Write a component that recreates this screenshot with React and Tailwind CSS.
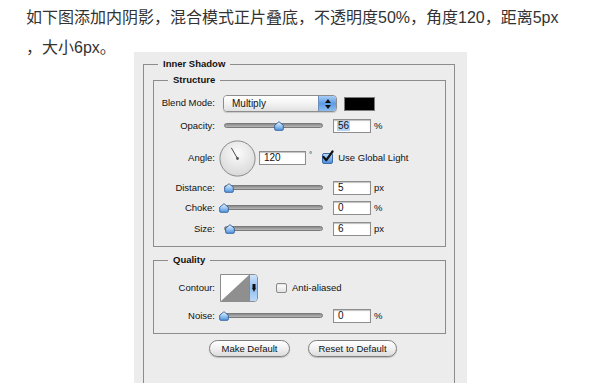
import React from 'react';

// slider thumb: little blue "house" shape
function Thumb({ left }) {
  return (
    <svg
      width="10"
      height="10"
      viewBox="0 0 10 10"
      className="absolute top-[2px]"
      style={{ left }}
    >
      <defs>
        <linearGradient id="thumbFill" x1="0" y1="0" x2="0" y2="1">
          <stop offset="0" stopColor="#eef6ff" />
          <stop offset="0.5" stopColor="#9cc7f2" />
          <stop offset="1" stopColor="#4f93de" />
        </linearGradient>
      </defs>
      <path
        d="M5 0.7 L9.3 4.2 V8.3 Q9.3 9.3 8.3 9.3 H1.7 Q0.7 9.3 0.7 8.3 V4.2 Z"
        fill="url(#thumbFill)"
        stroke="#2f5e9c"
        strokeWidth="0.9"
      />
    </svg>
  );
}

function Slider({ thumb }) {
  return (
    <div className="relative h-[14px] w-[100px]">
      <div className="absolute left-[1px] right-0 top-[4px] h-[5px] rounded-full border border-[#7a7a7a] bg-gradient-to-b from-[#8a8a8a] to-[#b8b8b8]" />
      <Thumb left={thumb} />
    </div>
  );
}

function NumField({ value, width = 'w-[38px]', selected }) {
  return (
    <div
      className={`flex h-[14px] ${width} items-center border border-[#8e8e8e] bg-white pl-[3px] text-[10px] leading-none shadow-[inset_0_1px_1px_rgba(0,0,0,0.25)]`}
    >
      <span className={selected ? 'bg-[#b4d3f7] px-[1px]' : 'px-[1px]'}>{value}</span>
    </div>
  );
}

function Label({ children }) {
  return <div className="w-[62px] shrink-0 pr-[1px] text-right">{children}</div>;
}

function SliderRow({ label, thumb, value, unit, selected, className }) {
  return (
    <div className={`flex h-[14px] items-center ${className}`}>
      <Label>{label}</Label>
      <div className="ml-[7px]">
        <Slider thumb={thumb} />
      </div>
      <div className="ml-[10px]">
        <NumField value={value} selected={selected} />
      </div>
      <span className="ml-[3px]">{unit}</span>
    </div>
  );
}

function Checkbox({ checked }) {
  if (checked) {
    return (
      <div className="relative h-[11px] w-[11px] rounded-[2px] border border-[#3a6aa8] bg-gradient-to-b from-[#b8d8fa] to-[#4d8fdc]">
        <svg width="13" height="13" viewBox="0 0 13 13" className="absolute -right-[2px] -top-[4px]">
          <path d="M2.5 7 L5.3 10.2 L11.5 1.5" fill="none" stroke="#111" strokeWidth="2.2" strokeLinecap="round" strokeLinejoin="round" />
        </svg>
      </div>
    );
  }
  return (
    <div className="h-[10px] w-[11px] rounded-[2px] border border-[#8a8a8a] bg-gradient-to-b from-white to-[#e2e2e2] shadow-[inset_0_1px_1px_rgba(0,0,0,0.1)]" />
  );
}

function AngleDial() {
  return (
    <svg width="37" height="37" viewBox="0 0 37 37">
      <defs>
        <radialGradient id="dialFill" cx="0.5" cy="0.35" r="0.7">
          <stop offset="0" stopColor="#fbfbfb" />
          <stop offset="1" stopColor="#d6d6d6" />
        </radialGradient>
      </defs>
      <circle cx="18.5" cy="18.5" r="17.6" fill="url(#dialFill)" stroke="#8a8a8a" strokeWidth="1" />
      <line x1="18.5" y1="18.5" x2="12.3" y2="7.8" stroke="#4a4a4a" strokeWidth="1" />
      <circle cx="18.5" cy="18.5" r="1.4" fill="#555" />
    </svg>
  );
}

function BlendSelect() {
  return (
    <div className="flex h-[17px] w-[114px] overflow-hidden rounded-[4px] border border-[#8d8d8d] shadow-[0_1px_1px_rgba(0,0,0,0.15)]">
      <div className="flex flex-1 items-center bg-gradient-to-b from-white via-[#f3f3f3] to-[#e0e0e0] pl-[8px] text-[10px]">
        Multiply
      </div>
      <div className="flex w-[18px] flex-col items-center justify-center gap-[2px] border-l border-[#6c8fc0] bg-gradient-to-b from-[#a9cdf6] via-[#5d9be4] to-[#8cbcf0]">
        <svg width="6" height="4" viewBox="0 0 6 4"><path d="M3 0 L6 4 H0 Z" fill="#111" /></svg>
        <svg width="6" height="4" viewBox="0 0 6 4"><path d="M0 0 H6 L3 4 Z" fill="#111" /></svg>
      </div>
    </div>
  );
}

function ContourPicker() {
  return (
    <div className="flex h-[28px] w-[38px] overflow-hidden rounded-r-[4px] border border-[#8d8d8d]">
      <svg width="28" height="26" viewBox="0 0 28 26" className="block">
        <rect width="28" height="26" fill="#fff" />
        <path d="M0 26 L28 0 V26 Z" fill="#8f8f8f" />
      </svg>
      <div className="flex flex-1 items-center justify-center border-l border-[#6c8fc0] bg-gradient-to-b from-[#cfe4fb] via-[#8fbdf0] to-[#bcd9f8]">
        <svg width="4" height="8" viewBox="0 0 4 8"><path d="M0.5 0 H3.5 V4 H4 L2 8 L0 4 H0.5 Z" fill="#111" /></svg>
      </div>
    </div>
  );
}

function PillButton({ children, width }) {
  return (
    <button
      className={`h-[17px] ${width} rounded-full border border-[#7d7d7d] bg-gradient-to-b from-white via-[#f1f1f1] to-[#dcdcdc] text-[9.5px] leading-none text-[#111] shadow-[0_1px_1px_rgba(0,0,0,0.2)]`}
    >
      {children}
    </button>
  );
}

export default function App() {
  return (
    <div className="min-h-[391px] w-[600px] bg-white">
      {/* intro text */}
      <div className="h-[52px] whitespace-nowrap pl-[26px] pt-[3px] font-['Liberation_Sans','Noto_Sans_CJK_SC',sans-serif] text-[16px] leading-[30px] text-[#333]">
        <div>如下图添加内阴影，混合模式正片叠底，不透明度50%，角度120，距离5px</div>
        <div>，大小6px。</div>
      </div>

      {/* Photoshop panel */}
      <div className="ml-[134px] h-[331px] w-[333px] overflow-hidden bg-[#ececec] pl-[9px] pr-[12px] pt-[5px] font-['Liberation_Sans',Arial,sans-serif] text-[9.5px] text-[#111]">
        <fieldset className="h-[340px] border border-b-0 border-[#8c8c8c]">
          <legend className="ml-[14px] px-[5px] text-[9.5px] font-bold leading-[14px]">Inner Shadow</legend>

          {/* Structure */}
          <fieldset className="ml-[9px] mt-[2px] w-[293px] border border-[#8c8c8c] pb-[10px]">
            <legend className="ml-[14px] px-[5px] font-bold leading-[14px]">Structure</legend>

            <div className="mt-[8px] flex h-[17px] items-center">
              <Label>Blend Mode:</Label>
              <div className="ml-[7px]">
                <BlendSelect />
              </div>
              <div className="ml-[7px] h-[14px] w-[31px] border border-[#7a7a7a] bg-black" />
            </div>

            <SliderRow label="Opacity:" thumb={51} value="56" unit="%" selected className="mt-[7px]" />

            <div className="mt-[7px] flex h-[36px] items-center">
              <Label>Angle:</Label>
              <div className="ml-[3px]">
                <AngleDial />
              </div>
              <div className="ml-[3px]">
                <NumField value="120" width="w-[47px]" />
              </div>
              <span className="mb-[6px] ml-[3px] text-[8px]">°</span>
              <div className="ml-[10px]">
                <Checkbox checked />
              </div>
              <span className="ml-[5px]">Use Global Light</span>
            </div>

            <SliderRow label="Distance:" thumb={1} value="5" unit="px" className="mt-[5px]" />
            <SliderRow label="Choke:" thumb={-4} value="0" unit="%" className="mt-[6px]" />
            <SliderRow label="Size:" thumb={2} value="6" unit="px" className="mt-[7px]" />
          </fieldset>

          {/* Quality */}
          <fieldset className="ml-[9px] mt-[6px] w-[293px] border border-[#8c8c8c] pb-[10px]">
            <legend className="ml-[14px] px-[5px] font-bold leading-[14px]">Quality</legend>

            <div className="mt-[7px] flex h-[28px] items-center">
              <Label>Contour:</Label>
              <div className="ml-[4px]">
                <ContourPicker />
              </div>
              <div className="ml-[18px]">
                <Checkbox />
              </div>
              <span className="ml-[5px]">Anti-aliased</span>
            </div>

            <SliderRow label="Noise:" thumb={-4} value="0" unit="%" className="mt-[7px]" />
          </fieldset>

          <div className="mt-[6px] flex justify-center gap-[18px] pl-[8px]">
            <PillButton width="w-[81px]">Make Default</PillButton>
            <PillButton width="w-[89px]">Reset to Default</PillButton>
          </div>
        </fieldset>
      </div>
    </div>
  );
}
